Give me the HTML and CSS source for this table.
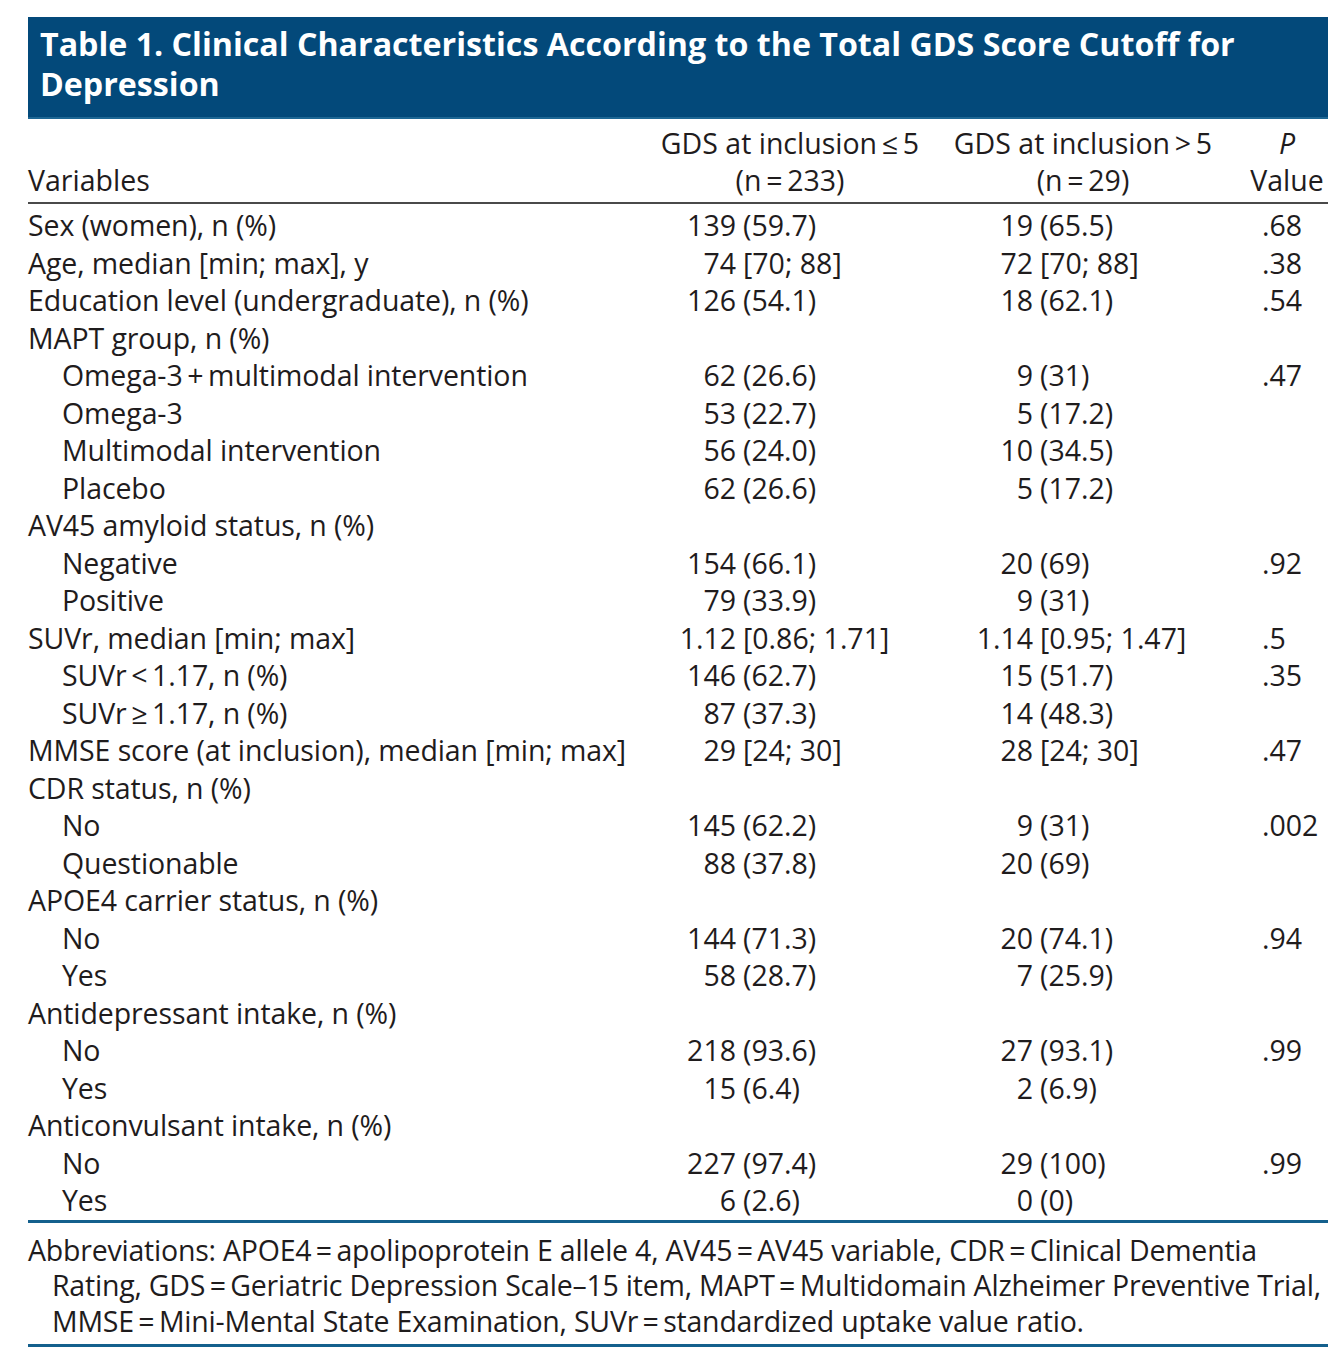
FILE: index.html
```html
<!DOCTYPE html>
<html lang="en">
<head>
<meta charset="utf-8">
<title>Table 1. Clinical Characteristics</title>
<link rel="stylesheet" href="styles.css">
</head>
<body>
<div class="page">
  <div class="title">Table 1. Clinical Characteristics According to the Total GDS Score Cutoff for Depression</div>

  <div class="head">
    <div class="h-var">Variables</div>
    <div class="h-col">GDS at inclusion&thinsp;≤&thinsp;5<br>(n&thinsp;=&thinsp;233)</div>
    <div class="h-col h-col3">GDS at inclusion&thinsp;&gt;&thinsp;5<br>(n&thinsp;=&thinsp;29)</div>
    <div class="h-p"><i>P</i><br>Value</div>
  </div>

  <div class="body">
    <div class="row"><span class="lab">Sex (women), n (%)</span><span class="a">139</span><span class="b">(59.7)</span><span class="a2">19</span><span class="b2">(65.5)</span><span class="p">.68</span></div>
    <div class="row"><span class="lab">Age, median [min; max], y</span><span class="a">74</span><span class="b">[70; 88]</span><span class="a2">72</span><span class="b2">[70; 88]</span><span class="p">.38</span></div>
    <div class="row"><span class="lab">Education level (undergraduate), n (%)</span><span class="a">126</span><span class="b">(54.1)</span><span class="a2">18</span><span class="b2">(62.1)</span><span class="p">.54</span></div>
    <div class="row"><span class="lab">MAPT group, n (%)</span></div>
    <div class="row"><span class="lab sub">Omega-3&thinsp;+&thinsp;multimodal intervention</span><span class="a">62</span><span class="b">(26.6)</span><span class="a2">9</span><span class="b2">(31)</span><span class="p">.47</span></div>
    <div class="row"><span class="lab sub">Omega-3</span><span class="a">53</span><span class="b">(22.7)</span><span class="a2">5</span><span class="b2">(17.2)</span><span class="p"></span></div>
    <div class="row"><span class="lab sub">Multimodal intervention</span><span class="a">56</span><span class="b">(24.0)</span><span class="a2">10</span><span class="b2">(34.5)</span><span class="p"></span></div>
    <div class="row"><span class="lab sub">Placebo</span><span class="a">62</span><span class="b">(26.6)</span><span class="a2">5</span><span class="b2">(17.2)</span><span class="p"></span></div>
    <div class="row"><span class="lab">AV45 amyloid status, n (%)</span></div>
    <div class="row"><span class="lab sub">Negative</span><span class="a">154</span><span class="b">(66.1)</span><span class="a2">20</span><span class="b2">(69)</span><span class="p">.92</span></div>
    <div class="row"><span class="lab sub">Positive</span><span class="a">79</span><span class="b">(33.9)</span><span class="a2">9</span><span class="b2">(31)</span><span class="p"></span></div>
    <div class="row"><span class="lab">SUVr, median [min; max]</span><span class="a">1.12</span><span class="b">[0.86; 1.71]</span><span class="a2">1.14</span><span class="b2">[0.95; 1.47]</span><span class="p">.5</span></div>
    <div class="row"><span class="lab sub">SUVr&thinsp;&lt;&thinsp;1.17, n (%)</span><span class="a">146</span><span class="b">(62.7)</span><span class="a2">15</span><span class="b2">(51.7)</span><span class="p">.35</span></div>
    <div class="row"><span class="lab sub">SUVr&thinsp;≥&thinsp;1.17, n (%)</span><span class="a">87</span><span class="b">(37.3)</span><span class="a2">14</span><span class="b2">(48.3)</span><span class="p"></span></div>
    <div class="row"><span class="lab">MMSE score (at inclusion), median [min; max]</span><span class="a">29</span><span class="b">[24; 30]</span><span class="a2">28</span><span class="b2">[24; 30]</span><span class="p">.47</span></div>
    <div class="row"><span class="lab">CDR status, n (%)</span></div>
    <div class="row"><span class="lab sub">No</span><span class="a">145</span><span class="b">(62.2)</span><span class="a2">9</span><span class="b2">(31)</span><span class="p">.002</span></div>
    <div class="row"><span class="lab sub">Questionable</span><span class="a">88</span><span class="b">(37.8)</span><span class="a2">20</span><span class="b2">(69)</span><span class="p"></span></div>
    <div class="row"><span class="lab">APOE4 carrier status, n (%)</span></div>
    <div class="row"><span class="lab sub">No</span><span class="a">144</span><span class="b">(71.3)</span><span class="a2">20</span><span class="b2">(74.1)</span><span class="p">.94</span></div>
    <div class="row"><span class="lab sub">Yes</span><span class="a">58</span><span class="b">(28.7)</span><span class="a2">7</span><span class="b2">(25.9)</span><span class="p"></span></div>
    <div class="row"><span class="lab">Antidepressant intake, n (%)</span></div>
    <div class="row"><span class="lab sub">No</span><span class="a">218</span><span class="b">(93.6)</span><span class="a2">27</span><span class="b2">(93.1)</span><span class="p">.99</span></div>
    <div class="row"><span class="lab sub">Yes</span><span class="a">15</span><span class="b">(6.4)</span><span class="a2">2</span><span class="b2">(6.9)</span><span class="p"></span></div>
    <div class="row"><span class="lab">Anticonvulsant intake, n (%)</span></div>
    <div class="row"><span class="lab sub">No</span><span class="a">227</span><span class="b">(97.4)</span><span class="a2">29</span><span class="b2">(100)</span><span class="p">.99</span></div>
    <div class="row"><span class="lab sub">Yes</span><span class="a">6</span><span class="b">(2.6)</span><span class="a2">0</span><span class="b2">(0)</span><span class="p"></span></div>
  </div>

  <div class="foot">Abbreviations: APOE4&thinsp;=&thinsp;apolipoprotein E allele 4, AV45&thinsp;=&thinsp;AV45 variable, CDR&thinsp;=&thinsp;Clinical Dementia<br>Rating, GDS&thinsp;=&thinsp;Geriatric Depression Scale–15 item, MAPT&thinsp;=&thinsp;Multidomain Alzheimer Preventive Trial,<br>MMSE&thinsp;=&thinsp;Mini-Mental State Examination, SUVr&thinsp;=&thinsp;standardized uptake value ratio.</div>
</div>
</body>
</html>
```

FILE: styles.css
```css
html, body {
  margin: 0;
  padding: 0;
  background: #ffffff;
}

body {
  font-family: "Open Sans", "Noto Sans", "Liberation Sans", sans-serif;
  color: #1f1c1d;
  font-size: 28.5px;
}

.page {
  width: 1300px;
  margin-left: 28px;
  padding-top: 17px;
}

.title {
  background: #03497a;
  color: #ffffff;
  font-weight: 700;
  font-size: 32.2px;
  line-height: 40px;
  padding: 7px 12px 15px 12px;
  height: 80px;
  box-shadow: inset 0 -2px 0 #1e6794;
}

.head {
  display: grid;
  grid-template-columns: 612px 300px 286px 102px;
  line-height: 37px;
  padding: 6px 0 3px 0;
  border-bottom: 2px solid #4a4a4a;
}

.h-var {
  align-self: end;
}

.h-col {
  text-align: center;
}

.h-p {
  text-align: center;
  padding-left: 20px;
}

.body {
  padding-top: 3px;
  border-bottom: 3px solid #14608d;
}

.row {
  display: grid;
  grid-template-columns: 612px 96px 214px 83px 223px 72px;
  height: 37.5px;
  line-height: 37.5px;
  white-space: nowrap;
}

.lab {
  letter-spacing: -0.1px;
}

.lab.sub {
  padding-left: 34px;
}

.a, .a2 {
  text-align: right;
}

.b, .b2 {
  padding-left: 7px;
}

.p {
  padding-left: 6px;
}

.foot {
  line-height: 35.5px;
  padding: 10px 0 5px 24px;
  text-indent: -24px;
  letter-spacing: -0.22px;
  white-space: nowrap;
  border-bottom: 3px solid #14608d;
}
```
